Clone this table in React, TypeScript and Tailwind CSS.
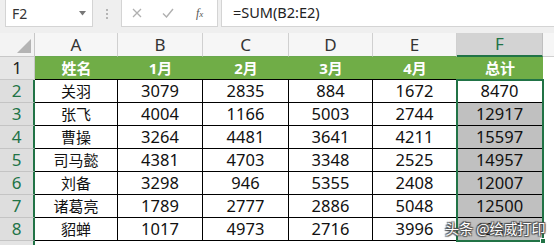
import React from "react";

const rows: [string, number, number, number, number, number][] = [
  ["关羽", 3079, 2835, 884, 1672, 8470],
  ["张飞", 4004, 1166, 5003, 2744, 12917],
  ["曹操", 3264, 4481, 3641, 4211, 15597],
  ["司马懿", 4381, 4703, 3348, 2525, 14957],
  ["刘备", 3298, 946, 5355, 2408, 12007],
  ["诸葛亮", 1789, 2777, 2886, 5048, 12500],
  ["貂蝉", 1017, 4973, 2716, 3996, 12500],
];

const font = { fontFamily: '"Noto Sans", "Noto Sans CJK SC", sans-serif' };

export default function App() {
  return (
    <div
      className="w-[554px] h-[245px] bg-[#efefef] overflow-hidden relative"
      style={font}
    >
      {/* formula bar */}
      <div className="h-[27px] flex items-stretch">
        <div className="ml-[5px] w-[88px] bg-white border border-t-0 border-[#d4d4d4] flex items-center justify-between pl-[6px] pr-[6px]">
          <span className="text-[14px] text-[#333]">F2</span>
          <svg width="7" height="5" viewBox="0 0 7 5">
            <path d="M0 0 L7 0 L3.5 4.5 Z" fill="#777" />
          </svg>
        </div>
        <div className="w-[28px] flex flex-col items-center justify-center gap-[2px]">
          <span className="w-[2px] h-[2px] bg-[#b5b5b5]" />
          <span className="w-[2px] h-[2px] bg-[#b5b5b5]" />
          <span className="w-[2px] h-[2px] bg-[#b5b5b5]" />
        </div>
        <div className="w-[97px] bg-white border border-t-0 border-[#d4d4d4] flex items-center pl-[10px] gap-[20px]">
          <svg width="10" height="10" viewBox="0 0 10 10">
            <path d="M1 1 L9 9 M9 1 L1 9" stroke="#b0b0b0" strokeWidth="1.3" />
          </svg>
          <svg width="12" height="10" viewBox="0 0 12 10">
            <path d="M1 5.5 L4.5 9 L11 1" stroke="#b0b0b0" strokeWidth="1.4" fill="none" />
          </svg>
          <span
            className="text-[12px] italic text-[#555] ml-[2px]"
            style={{ fontFamily: '"Liberation Serif", serif' }}
          >
            f<span className="text-[9px]">x</span>
          </span>
        </div>
        <div className="ml-[3px] flex-1 bg-white border border-t-0 border-r-0 border-[#d4d4d4] flex items-center pl-[11px]">
          <span className="text-[14.5px] text-[#222]">=SUM(B2:E2)</span>
        </div>
      </div>

      {/* sheet */}
      <div className="mt-[6px] relative">
        <div className="grid grid-cols-[35px_83px_85px_86px_84px_84px_86px_1fr] grid-rows-[24px_23px_23px_23px_23px_23px_23px_23px_23px_10px]">
          {/* header row */}
          <div className="bg-[#f3f3f3] border-r border-b border-[#c8c8c8] relative">
            <svg className="absolute right-[3px] bottom-[3px]" width="14" height="14" viewBox="0 0 14 14">
              <path d="M14 0 L14 14 L0 14 Z" fill="#b4b4b4" />
            </svg>
          </div>
          {["A", "B", "C", "D", "E"].map((c) => (
            <div
              key={c}
              className="bg-[#f6f6f6] border-r border-[#d0d0d0] border-b border-b-[#6aa84f] flex items-center justify-center text-[17px] text-[#333]"
            >
              {c}
            </div>
          ))}
          <div className="bg-[#d3d3d3] border-r border-[#c0c0c0] border-b-2 border-b-[#217346] flex items-center justify-center text-[17px] text-[#217346]">
            F
          </div>
          <div className="bg-[#f6f6f6] border-b border-[#d0d0d0]" />

          {/* row 1 */}
          <div className="bg-[#e6e6e6] border-r border-b border-[#c8c8c8] flex items-center justify-center text-[17px] text-[#222]">
            1
          </div>
          {["姓名", "1月", "2月", "3月", "4月", "总计"].map((h) => (
            <div
              key={h}
              className="bg-[#70ad47] border-b border-black flex items-center justify-center text-[15px] font-bold text-white"
            >
              {h}
            </div>
          ))}
          <div className="bg-white" />

          {rows.map((r, i) => (
            <React.Fragment key={i}>
              <div className="bg-[#dedede] border-b border-[#c4c4c4] border-r-2 border-r-[#217346] flex items-center justify-center text-[17px] text-[#217346]">
                {i + 2}
              </div>
              <div className="bg-white border-r border-b border-black flex items-center justify-center text-[15px] text-[#111]">
                {r[0]}
              </div>
              {[r[1], r[2], r[3], r[4]].map((v, j) => (
                <div
                  key={j}
                  className="bg-white border-r border-b border-black flex items-center justify-center text-[16.5px] text-[#111]"
                >
                  {v}
                </div>
              ))}
              <div
                className={
                  (i === 0 ? "bg-white " : "bg-[#c0c0c0] ") +
                  "border-r border-b border-black flex items-center justify-center text-[16.5px] text-[#111]"
                }
              >
                {r[5]}
              </div>
              <div className="bg-white" />
            </React.Fragment>
          ))}
          <div className="bg-[#e4e4e4] border-r-2 border-[#217346]" />
          <div className="bg-white col-span-7" />
        </div>

        {/* selection border */}
        <div className="absolute left-[456px] top-[46px] w-[88px] h-[163px] border-2 border-[#217346] pointer-events-none">
          <div className="absolute right-[-4px] bottom-[-4px] w-[6px] h-[6px] bg-[#217346] border border-white" />
        </div>

        {/* watermark */}
        <div
          className="absolute left-[445px] top-[186px] text-[14px] leading-[18px] text-white whitespace-nowrap"
          style={{
            fontFamily: '"Noto Sans CJK SC", sans-serif',
            textShadow:
              "0 0 1px #444, 1px 1px 1px #555, -1px -1px 1px #555, 1px -1px 1px #555, -1px 1px 1px #555",
          }}
        >
          头条 @绘威打印
        </div>
      </div>
    </div>
  );
}
